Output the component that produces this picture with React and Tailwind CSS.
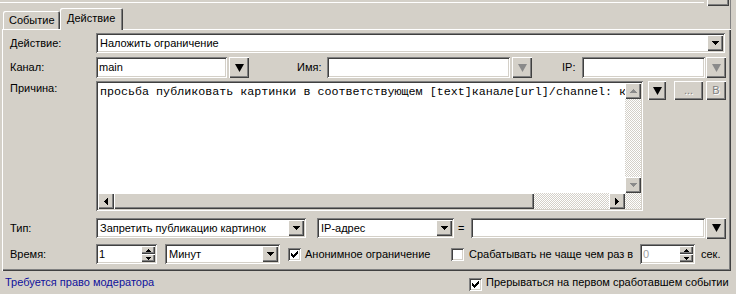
import React from "react";

const SUNKEN =
  "shadow-[inset_1px_1px_0_#808080,inset_-1px_-1px_0_#ffffff,inset_2px_2px_0_#404040,inset_-2px_-2px_0_#d4d0c8]";
const RAISED =
  "shadow-[inset_1px_1px_0_#ffffff,inset_-1px_-1px_0_#404040,inset_-2px_-2px_0_#808080]";
const CHECKER =
  "bg-[repeating-conic-gradient(#ffffff_0_25%,#d4d0c8_0_50%)] bg-[length:2px_2px]";
const DISABLED = "text-[#808080] [text-shadow:1px_1px_0_#ffffff]";

// small pixel triangles
const TriDown = ({ color = "#000" }) => (
  <svg width="7" height="4" viewBox="0 0 7 4">
    <path d="M0 0h7v1H0zM1 1h5v1H1zM2 2h3v1H2zM3 3h1v1H3z" fill={color} />
  </svg>
);

const TriUp = ({ color = "#000" }) => (
  <svg width="7" height="4" viewBox="0 0 7 4">
    <path d="M3 0h1v1H3zM2 1h3v1H2zM1 2h5v1H1zM0 3h7v1H0z" fill={color} />
  </svg>
);

const TinyTri = ({ dir = "down", color = "#000" }) => (
  <svg width="5" height="3" viewBox="0 0 5 3">
    {dir === "down" ? (
      <path d="M0 0h5v1H0zM1 1h3v1H1zM2 2h1v1H2z" fill={color} />
    ) : (
      <path d="M2 0h1v1H2zM1 1h3v1H1zM0 2h5v1H0z" fill={color} />
    )}
  </svg>
);

const SideTri = ({ dir = "left", color = "#000" }) => (
  <svg width="4" height="7" viewBox="0 0 4 7">
    {dir === "left" ? (
      <path d="M3 0h1v7H3zM2 1h1v5H2zM1 2h1v3H1zM0 3h1v1H0z" fill={color} />
    ) : (
      <path d="M0 0h1v7H0zM1 1h1v5H1zM2 2h1v3H2zM3 3h1v1H3z" fill={color} />
    )}
  </svg>
);

const BigTri = ({ color = "#000" }) => (
  <svg width="9" height="8" viewBox="0 0 9 8">
    <polygon points="0,0 9,0 4.5,8" fill={color} />
  </svg>
);

const Check = () => (
  <svg width="7" height="7" viewBox="0 0 7 7">
    <path
      d="M6 0h1v3H6zM5 1h1v3H5zM4 2h1v3H4zM3 3h1v3H3zM2 4h1v3H2zM1 3h1v3H1zM0 2h1v3H0z"
      fill="#000"
    />
  </svg>
);

const Checkbox = ({ checked }) => (
  <div className={`w-[13px] h-[13px] shrink-0 bg-white ${SUNKEN} flex items-center justify-center`}>
    {checked && <Check />}
  </div>
);

const Combo = ({ text, className }) => (
  <div className={`h-[20px] shrink-0 bg-white ${SUNKEN} p-[2px] flex items-center ${className}`}>
    <span className="flex-1 pl-[2px] whitespace-nowrap overflow-hidden">{text}</span>
    <div className={`w-[16px] h-[16px] bg-[#d4d0c8] ${RAISED} flex items-center justify-center`}>
      <TriDown />
    </div>
  </div>
);

const Field = ({ text = "", className }) => (
  <div className={`bg-white ${SUNKEN} px-[2px] flex items-center shrink-0 ${className}`}>
    <span className="pl-[1px]">{text}</span>
  </div>
);

const DropBtn = ({ disabled, className }) => (
  <div
    className={`bg-[#d4d0c8] ${RAISED} flex items-center justify-center shrink-0 ${className}`}
  >
    <BigTri color={disabled ? "#8a8a8a" : "#000"} />
  </div>
);

const Spin = ({ value, disabled, className }) => (
  <div className={`h-[20px] shrink-0 bg-white ${SUNKEN} p-[2px] flex items-center ${className}`}>
    <span className={`flex-1 pl-[1px] ${disabled ? "text-[#a0a0a0]" : ""}`}>{value}</span>
    <div className="w-[14px] h-[16px] flex flex-col">
      <div className={`h-[8px] bg-[#d4d0c8] ${RAISED} flex items-center justify-center`}>
        <TinyTri dir="up" />
      </div>
      <div className={`h-[8px] bg-[#d4d0c8] ${RAISED} flex items-center justify-center`}>
        <TinyTri dir="down" />
      </div>
    </div>
  </div>
);

const Label = ({ children, className = "" }) => (
  <span className={`w-[86px] shrink-0 ${className}`}>{children}</span>
);

const ScrollBtn = ({ children, className = "" }) => (
  <div
    className={`w-[16px] h-[16px] shrink-0 bg-[#d4d0c8] ${RAISED} flex items-center justify-center ${className}`}
  >
    {children}
  </div>
);

const App = () => {
  return (
    <div
      className={`w-[736px] h-[294px] overflow-hidden bg-[#d4d0c8] text-[11px] leading-[13px] text-black font-['Liberation_Sans',Arial,sans-serif]`}
    >
      {/* tail of the row above */}
      <div className="h-[8px] w-[731px] flex border-r border-[#808080]">
        <div className="w-[704px] h-[3px] border-b border-white" />
        <div className="ml-[3px] w-[22px] h-[6px] shadow-[inset_1px_0_0_#ffffff,inset_-1px_-1px_0_#404040,inset_-2px_-2px_0_#808080]" />
      </div>

      {/* tabs */}
      <div className="h-[21px] w-[731px] pl-[3px] flex items-end border-r border-[#808080] relative z-10">
        <div className="w-[57px] h-[18px] pl-[6px] pt-[3px] rounded-t-[2px] shadow-[inset_1px_1px_0_#ffffff,inset_-1px_0_0_#404040,inset_-2px_0_0_#808080]">
          Событие
        </div>
        <div className="w-[63px] h-[22px] -mb-[1px] pl-[7px] pt-[4px] bg-[#d4d0c8] rounded-t-[2px] shadow-[inset_1px_1px_0_#ffffff,inset_-1px_0_0_#404040,inset_-2px_0_0_#808080]">
          Действие
        </div>
      </div>

      {/* tab page */}
      <div className="ml-[2px] w-[729px] h-[242px] pt-[4px] pl-[8px] flex flex-col shadow-[inset_1px_1px_0_#ffffff,inset_-1px_-1px_0_#404040,inset_-2px_-2px_0_#808080]">
        <div className="flex items-center h-[20px]">
          <Label>Действие:</Label>
          <Combo text="Наложить ограничение" className="w-[629px]" />
        </div>

        <div className="flex items-center h-[21px] mt-[4px]">
          <Label>Канал:</Label>
          <Field text="main" className="w-[131px] h-[21px]" />
          <DropBtn className="ml-[2px] w-[20px] h-[21px]" />
          <span className="ml-[48px] w-[30px]">Имя:</span>
          <Field className="w-[183px] h-[21px]" />
          <DropBtn disabled className="ml-[2px] w-[20px] h-[21px]" />
          <span className="ml-[30px] w-[20px]">IP:</span>
          <Field className="w-[123px] h-[21px]" />
          <DropBtn disabled className="ml-[1px] w-[20px] h-[21px]" />
        </div>

        <div className="flex items-start h-[130px] mt-[3px]">
          <Label className="pt-[1px]">Причина:</Label>
          <div className={`w-[547px] h-[130px] shrink-0 ${SUNKEN} p-[2px] flex flex-col`}>
            <div className="flex flex-1 min-h-0">
              <div className="flex-1 bg-white px-[2px] pt-[2px] whitespace-nowrap overflow-hidden font-['Liberation_Mono','Courier_New',monospace] text-[11.7px] leading-[14px]">
                просьба публиковать картинки в соответствующем [text]канале[url]/channel: к
              </div>
              <div className="w-[16px] flex flex-col">
                <ScrollBtn>
                  <TriUp color="#8a8a8a" />
                </ScrollBtn>
                <div className={`flex-1 ${CHECKER}`} />
                <ScrollBtn>
                  <TriDown color="#8a8a8a" />
                </ScrollBtn>
              </div>
            </div>
            <div className="h-[16px] flex">
              <ScrollBtn>
                <SideTri dir="left" />
              </ScrollBtn>
              <div className={`w-[420px] h-[16px] bg-[#d4d0c8] ${RAISED}`} />
              <div className={`flex-1 ${CHECKER}`} />
              <ScrollBtn>
                <SideTri dir="right" />
              </ScrollBtn>
              <div className={`w-[16px] ${CHECKER}`} />
            </div>
          </div>
          <DropBtn className="ml-[5px] w-[18px] h-[19px]" />
          <div className={`ml-[8px] w-[29px] h-[19px] bg-[#d4d0c8] ${RAISED} flex items-center justify-center ${DISABLED}`}>
            ...
          </div>
          <div className={`ml-[3px] w-[20px] h-[19px] bg-[#d4d0c8] ${RAISED} flex items-center justify-center ${DISABLED}`}>
            B
          </div>
        </div>

        <div className="flex items-center h-[20px] mt-[7px]">
          <Label>Тип:</Label>
          <Combo text="Запретить публикацию картинок" className="w-[210px]" />
          <Combo text="IP-адрес" className="ml-[11px] w-[137px]" />
          <span className="w-[17px] pl-[4px]">=</span>
          <Field className="w-[234px] h-[20px]" />
          <DropBtn className="ml-[1px] w-[20px] h-[21px]" />
        </div>

        <div className="flex items-center h-[20px] mt-[6px]">
          <Label>Время:</Label>
          <Spin value="1" className="w-[61px]" />
          <Combo text="Минут" className="ml-[8px] w-[115px]" />
          <div className="ml-[8px]">
            <Checkbox checked />
          </div>
          <span className="ml-[4px] w-[146px] shrink-0">Анонимное ограничение</span>
          <Checkbox />
          <span className="ml-[5px] w-[171px] shrink-0 whitespace-nowrap">
            Срабатывать не чаще чем раз в
          </span>
          <Spin value="0" disabled className="w-[55px]" />
          <span className="ml-[6px]">сек.</span>
        </div>
      </div>

      {/* footer */}
      <div className="h-[23px] flex items-center pl-[5px]">
        <span className="w-[464px] shrink-0 text-[#10109c]">Требуется право модератора</span>
        <div className="mt-[3px]">
          <Checkbox checked />
        </div>
        <span className="ml-[4px] whitespace-nowrap">Прерываться на первом сработавшем событии</span>
      </div>
    </div>
  );
};

export default App;
